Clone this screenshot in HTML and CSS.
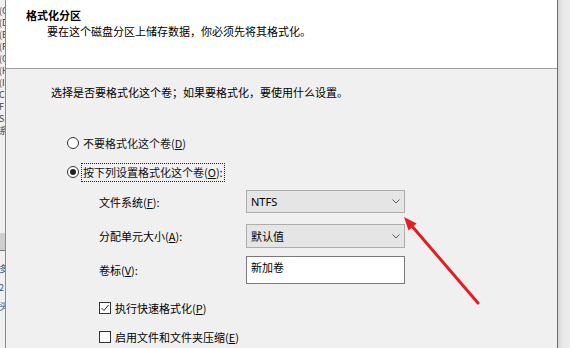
FILE: index.html
```html
<!DOCTYPE html>
<html lang="zh-CN">
<head>
  <meta charset="UTF-8" />
  <title>格式化分区</title>
  <link rel="stylesheet" href="styles.css">
</head>
<body>
  <div class="screen">
    <div class="behind">
      <div class="behind-top">
        <span>(C:)</span><span>(D:)</span><span>(E:)</span><span>(F:)</span><span>(G:)</span><span>(H:)</span><span>(I:)</span>
        <span>C</span><span>F</span><span>S</span><span>系</span>
      </div>
      <div class="behind-band"></div>
      <div class="behind-bottom">
        <span>多</span><span>2</span><span>头</span>
      </div>
    </div>

    <div class="dialog">
      <div class="head">
        <div class="title">格式化分区</div>
        <div class="subtitle">要在这个磁盘分区上储存数据，你必须先将其格式化。</div>
      </div>

      <div class="body">
        <p class="intro">选择是否要格式化这个卷；如果要格式化，要使用什么设置。</p>

        <div class="radio-row r1">
          <span class="radio"></span>
          <span class="opt">不要格式化这个卷(<u>D</u>)</span>
        </div>
        <div class="radio-row r2">
          <span class="radio checked"></span>
          <span class="opt focus">按下列设置格式化这个卷(<u>O</u>):</span>
        </div>

        <div class="fields">
          <div class="field f1">
            <span class="field-label">文件系统(<u>F</u>):</span>
            <div class="select">
              <span class="latin">NTFS</span>
              <svg class="chev" width="8" height="5" viewBox="0 0 8 5"><polyline points="0.5,0.5 4,4 7.5,0.5" fill="none" stroke="#5a5a5a" stroke-width="1"/></svg>
            </div>
          </div>
          <div class="field f2">
            <span class="field-label">分配单元大小(<u>A</u>):</span>
            <div class="select">
              <span>默认值</span>
              <svg class="chev" width="8" height="5" viewBox="0 0 8 5"><polyline points="0.5,0.5 4,4 7.5,0.5" fill="none" stroke="#5a5a5a" stroke-width="1"/></svg>
            </div>
          </div>
          <div class="field f3">
            <span class="field-label">卷标(<u>V</u>):</span>
            <div class="textbox">新加卷</div>
          </div>
        </div>

        <div class="check-row c1">
          <span class="check">
            <svg width="10" height="10" viewBox="0 0 10 10"><polyline points="1.5,5 4,7.5 8.5,2" fill="none" stroke="#222" stroke-width="1"/></svg>
          </span>
          <span>执行快速格式化(<u>P</u>)</span>
        </div>
        <div class="check-row c2">
          <span class="check"></span>
          <span>启用文件和文件夹压缩(<u>E</u>)</span>
        </div>
      </div>
    </div>

    <div class="shadow"></div>

    <svg class="arrow" width="570" height="348" viewBox="0 0 570 348">
      <line x1="478" y1="303" x2="411" y2="225" stroke="#e31e24" stroke-width="3" stroke-linecap="round"/>
      <polygon points="404,217 416.5,223.5 408.5,230.5" fill="#e31e24"/>
    </svg>
  </div>
</body>
</html>
```

FILE: styles.css
```css
* {
  box-sizing: border-box;
}

body {
  margin: 0;
  padding: 0;
  background-color: #f0f0f0;
  font-family: "Noto Sans CJK SC", "Noto Sans", sans-serif;
  font-size: 11px;
  line-height: 16px;
  color: #111;
}

u {
  text-decoration: underline;
  text-underline-offset: 1px;
}

.screen {
  position: relative;
  display: flex;
  width: 570px;
  height: 348px;
  overflow: hidden;
}

/* window behind the dialog */
.behind {
  width: 6px;
  flex: none;
  display: flex;
  flex-direction: column;
  background-color: #f0f0f0;
  border-right: 1px solid #8a8a8a;
  overflow: hidden;
  font-size: 9px;
}

.behind span {
  display: block;
  white-space: nowrap;
  margin-left: -1px;
  color: #444;
}

.behind-top {
  padding-top: 5px;
  line-height: 12px;
  height: 233px;
}

.behind-band {
  height: 18px;
  background-color: #cfcfcf;
  border-bottom: 1px solid #777;
}

.behind-bottom {
  padding-top: 8px;
  line-height: 19px;
}

.behind-bottom span {
  color: #2a5a78;
}

/* dialog */
.dialog {
  width: 552px;
  flex: none;
  display: flex;
  flex-direction: column;
  border-right: 1px solid #6b6b6b;
  background-color: #f0f0f0;
}

.head {
  height: 69px;
  flex: none;
  background-color: #fff;
  border-bottom: 1px solid #a0a0a0;
  padding: 7px 0 0 20px;
}

.title {
  font-weight: 700;
  color: #000;
}

.subtitle {
  padding-left: 21px;
  color: #000;
}

.body {
  padding: 15px 0 0 45px;
}

.intro {
  margin: 0;
  color: #000;
}

.radio-row {
  display: flex;
  align-items: center;
  margin-left: 16px;
  height: 20px;
}

.r1 {
  margin-top: 33px;
}

.r2 {
  margin-top: 9px;
}

.radio {
  width: 12px;
  height: 12px;
  flex: none;
  border: 1px solid #333;
  border-radius: 50%;
  background-color: #fff;
  margin-right: 2px;
  display: flex;
  align-items: center;
  justify-content: center;
}

.radio.checked::after {
  content: "";
  width: 6px;
  height: 6px;
  border-radius: 50%;
  background-color: #222;
}

.opt {
  padding: 0 1px;
  border: 1px solid transparent;
  height: 19px;
  line-height: 17px;
}

.opt.focus {
  border: 1px dotted #222;
}

.fields {
  margin-left: 48px;
  margin-top: 8px;
  display: flex;
  flex-direction: column;
}

.field {
  display: grid;
  grid-template-columns: 147px 159px;
  align-items: center;
}

.f2 {
  margin-top: 11px;
}

.f3 {
  margin-top: 8px;
}

.field-label {
  color: #000;
}

.select {
  height: 23px;
  display: flex;
  align-items: center;
  padding-left: 4px;
  background-color: #e5e5e5;
  border: 1px solid #adadad;
  color: #000;
}

.f2 .select {
  height: 24px;
}

.latin {
  font-family: "Noto Sans", sans-serif;
  font-size: 11px;
}

.chev {
  margin-left: auto;
  margin-right: 4px;
}

.textbox {
  height: 28px;
  padding: 2px 0 0 4px;
  background-color: #fff;
  border: 1px solid #7a7a7a;
  color: #000;
  align-self: start;
}

.f3 .field-label {
  align-self: center;
}

.check-row {
  display: flex;
  align-items: center;
  margin-left: 48px;
  height: 16px;
  color: #000;
}

.c1 {
  margin-top: 16px;
}

.c2 {
  margin-top: 13px;
}

.check {
  width: 12px;
  height: 12px;
  flex: none;
  border: 1px solid #333;
  background-color: #fff;
  margin-right: 4px;
  display: flex;
  align-items: center;
  justify-content: center;
}

.shadow {
  flex: 1;
  background: linear-gradient(to right, #d6d6d6, #e8e8e8 40%, #ececec);
}

.arrow {
  position: absolute;
  left: 0;
  top: 0;
  pointer-events: none;
}
```
